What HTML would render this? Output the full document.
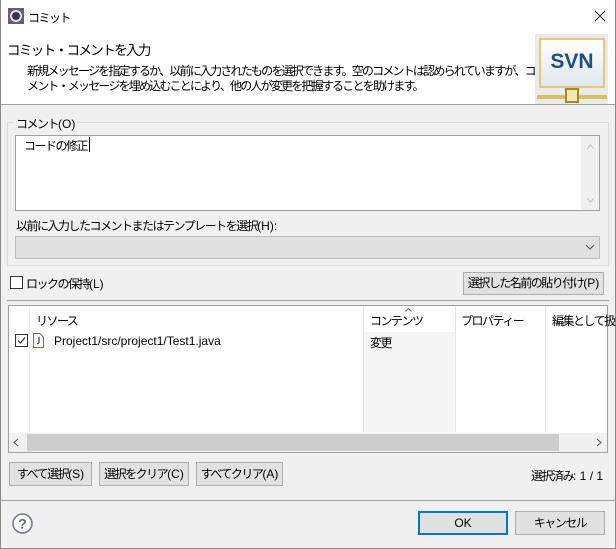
<!DOCTYPE html>
<html><head><meta charset="utf-8"><style>
*{box-sizing:border-box;margin:0;padding:0}
body{width:616px;height:549px;overflow:hidden;background:#f0f0f0;font-family:"Liberation Sans","Noto Sans CJK JP",sans-serif;font-size:12px;color:#000;position:relative;letter-spacing:-1.5px}
i{font-style:normal;letter-spacing:0}
.a{position:absolute;white-space:nowrap}
.btn{position:absolute;background:#e1e1e1;border:1px solid #adadad;text-align:center;line-height:21px;font-size:12px;white-space:nowrap}
.win{position:absolute;left:0;top:0;width:616px;height:549px;border:1px solid #8a8a8a;border-top:none}
</style></head><body>
<div class="a" style="left:0;top:0;width:616px;height:105px;background:#fff"></div>
<div class="a" style="left:0;top:104px;width:616px;height:1px;background:#a0a0a0"></div>
<div class="win"></div>
<svg class="a" style="left:8px;top:8px" width="16" height="16" viewBox="0 0 16 16"><rect x="0" y="0" width="16" height="16" fill="#6b5b7b"/><circle cx="8" cy="8" r="6" fill="#ddd"/><circle cx="8" cy="8" r="4" fill="#3a3050"/></svg>
<div class="a" style="left:28px;top:9px;font-size:12px">コミット</div>
<svg class="a" style="left:594px;top:10px" width="12" height="12"><path d="M1 1L11 11M11 1L1 11" stroke="#222" stroke-width="1"/></svg>
<div class="a" style="left:7px;top:39px;font-size:13.5px;letter-spacing:-1.6px">コミット・コメントを入力</div>
<div class="a" style="left:27px;top:64px;line-height:15px;letter-spacing:-1.8px">新規メッセージを指定するか、以前に入力されたものを選択できます。空のコメントは認められていますが、コ<br>メント・メッセージを埋め込むことにより、他の人が変更を把握することを助けます。</div>
<div class="a" style="left:535px;top:34px;width:73px;height:70px;background:#eaeaea"></div>
<div class="a" style="left:539px;top:38px;width:66px;height:50px;background:linear-gradient(#fff,#dfe6ee);border:2px solid #e8c878;color:#1f4f86;font-weight:bold;font-size:21px;text-align:center;line-height:44px;letter-spacing:0">SVN</div>
<div class="a" style="left:537px;top:95px;width:70px;height:4px;background:#d8c060"></div>
<div class="a" style="left:565px;top:88px;width:14px;height:15px;background:#f3e9b0;border:2px solid #a08830"></div>
<div class="a" style="left:7px;top:122px;width:602px;height:144px;border:1px solid #dcdcdc"></div>
<div class="a" style="left:14px;top:115px;background:#f0f0f0;padding:0 2px">コメント<i>(O)</i></div>
<div class="a" style="left:15px;top:135px;width:585px;height:76px;background:#fff;border:1px solid #a0a0a0"></div>
<div class="a" style="left:581px;top:136px;width:18px;height:74px;background:#f0f0f0"></div>
<svg class="a" style="left:586px;top:144px" width="9" height="6"><path d="M1 5L4.5 1L8 5" stroke="#c0c0c0" fill="none"/></svg>
<svg class="a" style="left:586px;top:197px" width="9" height="6"><path d="M1 1L4.5 5L8 1" stroke="#c0c0c0" fill="none"/></svg>
<div class="a" style="left:24px;top:137px">コードの修正</div>
<div class="a" style="left:89px;top:137px;width:1px;height:15px;background:#000"></div>
<div class="a" style="left:16px;top:217px">以前に入力したコメントまたはテンプレートを選択<i>(H):</i></div>
<div class="a" style="left:15px;top:236px;width:585px;height:23px;background:#e0e0e0;border:1px solid #bcbcbc"></div>
<svg class="a" style="left:585px;top:244px" width="10" height="7"><path d="M1 1L5 5L9 1" stroke="#555" fill="none"/></svg>
<div class="a" style="left:10px;top:276px;width:13px;height:13px;background:#fff;border:1px solid #333"></div>
<div class="a" style="left:26px;top:275px">ロックの保持<i>(L)</i></div>
<div class="btn" style="left:463px;top:272px;width:141px;height:23px">選択した名前の貼り付け<i>(P)</i></div>
<div class="a" style="left:7px;top:300px;width:602px;height:1px;background:#a0a0a0"></div>
<div class="a" style="left:8px;top:305px;width:600px;height:148px;background:#fff;border:1px solid #a0a0a0"></div>
<div class="a" style="left:29px;top:306px;width:1px;height:126px;background:#eef2f8"></div>
<div class="a" style="left:363px;top:306px;width:92px;height:126px;background:#f5f5f5"></div>
<div class="a" style="left:363px;top:306px;width:1px;height:126px;background:#e5e5e5"></div>
<div class="a" style="left:455px;top:306px;width:1px;height:126px;background:#e5e5e5"></div>
<div class="a" style="left:545px;top:306px;width:1px;height:126px;background:#e5e5e5"></div>
<div class="a" style="left:364px;top:306px;width:91px;height:26px;background:#fff"></div>
<div class="a" style="left:36px;top:312px">リソース</div>
<div class="a" style="left:370px;top:312px">コンテンツ</div>
<svg class="a" style="left:405px;top:308px" width="7" height="4"><path d="M0.5 3.5L3.5 0.5L6.5 3.5" stroke="#666" fill="none"/></svg>
<div class="a" style="left:461px;top:312px">プロパティー</div>
<div class="a" style="left:552px;top:312px">編集として扱</div>
<div class="a" style="left:15px;top:334px;width:13px;height:13px;border:1px solid #333;background:#fff"></div>
<svg class="a" style="left:16px;top:335px" width="11" height="11"><path d="M2 5.5L4.5 8L9 2.5" stroke="#333" fill="none" stroke-width="1.2"/></svg>
<svg class="a" style="left:33px;top:333px" width="11" height="15"><path d="M0.5 0.5H7L10.5 4V14.5H0.5Z" fill="#fff" stroke="#8a7040"/><path d="M6 4V9Q6 11 4 10.5" stroke="#2a4f8a" fill="none" stroke-width="1.3"/></svg>
<div class="a" style="left:54px;top:334px;letter-spacing:0">Project1/src/project1/Test1.java</div>
<div class="a" style="left:370px;top:334px">変更</div>
<div class="a" style="left:9px;top:433px;width:598px;height:19px;background:#f0f0f0"></div>
<div class="a" style="left:27px;top:434px;width:532px;height:17px;background:#cdcdcd"></div>
<svg class="a" style="left:13px;top:438px" width="6" height="9"><path d="M5 1L1 4.5L5 8" stroke="#555" fill="none"/></svg>
<svg class="a" style="left:596px;top:438px" width="6" height="9"><path d="M1 1L5 4.5L1 8" stroke="#555" fill="none"/></svg>
<div class="btn" style="left:9px;top:462px;width:83px;height:24px;line-height:22px">すべて選択<i>(S)</i></div>
<div class="btn" style="left:99px;top:462px;width:90px;height:24px;line-height:22px">選択をクリア<i>(C)</i></div>
<div class="btn" style="left:196px;top:462px;width:87px;height:24px;line-height:22px">すべてクリア<i>(A)</i></div>
<div class="a" style="left:531px;top:467px">選択済み<i>: 1 / 1</i></div>
<div class="a" style="left:1px;top:500px;width:614px;height:1px;background:#a0a0a0"></div>
<svg class="a" style="left:12px;top:513px" width="21" height="21"><circle cx="10.5" cy="10.5" r="9.5" fill="#fff" stroke="#6a7a8a" stroke-width="1.5"/><text x="10.5" y="15.5" text-anchor="middle" font-size="14" font-family="Liberation Sans" font-weight="bold" fill="#5a6a7a" letter-spacing="0">?</text></svg>
<div class="btn" style="left:418px;top:511px;width:90px;height:24px;border:2px solid #0078d7;line-height:20px;letter-spacing:0">OK</div>
<div class="btn" style="left:515px;top:511px;width:90px;height:24px;line-height:22px">キャンセル</div>
</body></html>
